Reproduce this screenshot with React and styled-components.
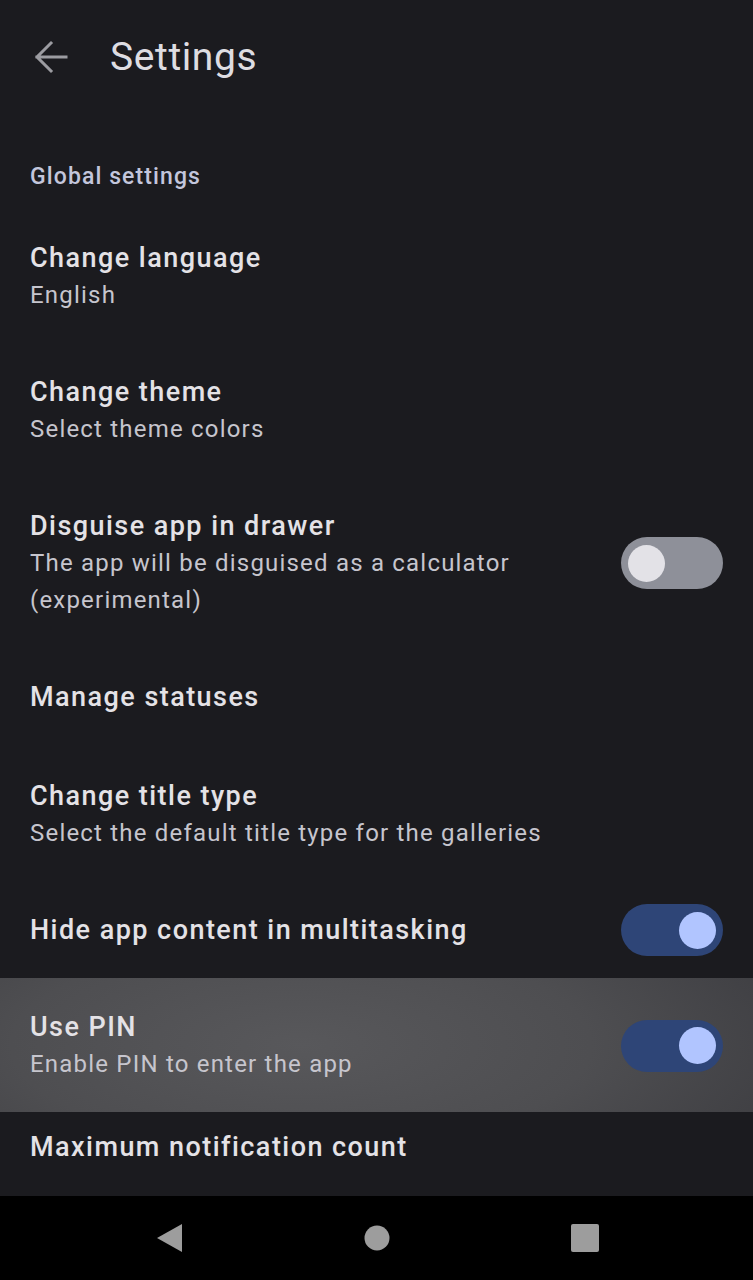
import React from 'react';
import styled, { createGlobalStyle } from 'styled-components';

const GlobalStyle = createGlobalStyle`
  html, body {
    margin: 0;
    padding: 0;
    background: #1b1b1f;
  }
  body {
    font-family: Roboto, "Noto Sans", sans-serif;
    -webkit-font-smoothing: antialiased;
  }
`;

const Screen = styled.div`
  width: 753px;
  height: 1280px;
  display: flex;
  flex-direction: column;
  background: #1b1b1f;
  overflow: hidden;
`;

const TopBar = styled.div`
  height: 114px;
  display: flex;
  align-items: center;
  flex-shrink: 0;
`;

const BackButton = styled.div`
  width: 110px;
  height: 114px;
  display: flex;
  align-items: center;
  padding-left: 34px;
  box-sizing: border-box;
`;

const Heading = styled.h1`
  margin: 0;
  font-size: 39px;
  font-weight: 400;
  color: #dedde2;
  line-height: 1;
  letter-spacing: 0.6px;
`;

const List = styled.div`
  flex: 1;
  overflow: hidden;
`;

const SectionLabel = styled.div`
  margin-top: 48px;
  padding: 0 30px 17px;
  line-height: 30px;
  font-size: 23px;
  font-weight: 500;
  letter-spacing: 1.1px;
  color: #c3c6dc;
`;

const Row = styled.div`
  display: flex;
  align-items: center;
  gap: 24px;
  padding: ${p => p.$top ?? 30}px 30px ${p => p.$bottom ?? 29}px;
  box-sizing: border-box;
  background: ${p => p.$pressed
    ? 'radial-gradient(ellipse 70% 140% at 40% 50%, #58585b 0%, #4e4e51 55%, #3e3e42 100%)'
    : 'transparent'};
`;

const Texts = styled.div`
  flex: 1;
  min-width: 0;
`;

const Title = styled.div`
  font-size: 27px;
  font-weight: 500;
  line-height: 38px;
  letter-spacing: 1.45px;
  color: #e4e2e6;
`;

const Sub = styled.div`
  font-size: 24px;
  line-height: 37px;
  color: #c6c5cd;
  letter-spacing: 1.2px;
`;

const Track = styled.div`
  width: 102px;
  height: 52px;
  margin: -7px 0;
  border-radius: 26px;
  flex-shrink: 0;
  display: flex;
  align-items: center;
  justify-content: ${p => (p.$on ? 'flex-end' : 'flex-start')};
  padding: 0 7px;
  box-sizing: border-box;
  background: ${p => (p.$on ? '#2e4577' : '#8e9099')};
`;

const Knob = styled.div`
  width: 37px;
  height: 37px;
  border-radius: 50%;
  background: ${p => (p.$on ? '#b1c5ff' : '#e3e2e7')};
`;

const NavBar = styled.div`
  height: 84px;
  flex-shrink: 0;
  background: #000;
  display: flex;
  align-items: center;
  justify-content: center;
`;

const NavSlot = styled.div`
  width: 208px;
  display: flex;
  justify-content: center;
  align-items: center;
`;

const Switch = ({ on }) => (
  <Track $on={on}>
    <Knob $on={on} />
  </Track>
);

const BackArrow = () => (
  <svg width="34" height="34" viewBox="0 0 34 34">
    <path d="M3 17H32M17 3L3 17L17 31" fill="none" stroke="#9c9ca1" strokeWidth="3" strokeLinecap="square" />
  </svg>
);

export default function App() {
  return (
    <Screen>
      <GlobalStyle />
      <TopBar>
        <BackButton><BackArrow /></BackButton>
        <Heading>Settings</Heading>
      </TopBar>
      <List>
        <SectionLabel>Global settings</SectionLabel>
        <Row>
          <Texts>
            <Title>Change language</Title>
            <Sub>English</Sub>
          </Texts>
        </Row>
        <Row>
          <Texts>
            <Title>Change theme</Title>
            <Sub>Select theme colors</Sub>
          </Texts>
        </Row>
        <Row>
          <Texts>
            <Title>Disguise app in drawer</Title>
            <Sub>The app will be disguised as a calculator (experimental)</Sub>
          </Texts>
          <Switch on={false} />
        </Row>
        <Row $bottom={31}>
          <Texts>
            <Title>Manage statuses</Title>
          </Texts>
        </Row>
        <Row>
          <Texts>
            <Title>Change title type</Title>
            <Sub>Select the default title type for the galleries</Sub>
          </Texts>
        </Row>
        <Row>
          <Texts>
            <Title>Hide app content in multitasking</Title>
          </Texts>
          <Switch on />
        </Row>
        <Row $pressed>
          <Texts>
            <Title>Use PIN</Title>
            <Sub>Enable PIN to enter the app</Sub>
          </Texts>
          <Switch on />
        </Row>
        <Row $top={16}>
          <Texts>
            <Title>Maximum notification count</Title>
          </Texts>
        </Row>
      </List>
      <NavBar>
        <NavSlot>
          <svg width="28" height="30" viewBox="0 0 28 30">
            <path d="M27 1V29L2 15Z" fill="#9d9d9d" />
          </svg>
        </NavSlot>
        <NavSlot>
          <svg width="26" height="26" viewBox="0 0 26 26">
            <circle cx="13" cy="13" r="12.5" fill="#9d9d9d" />
          </svg>
        </NavSlot>
        <NavSlot>
          <svg width="28" height="28" viewBox="0 0 28 28">
            <rect x="0" y="0" width="28" height="28" rx="2" fill="#9d9d9d" />
          </svg>
        </NavSlot>
      </NavBar>
    </Screen>
  );
}
